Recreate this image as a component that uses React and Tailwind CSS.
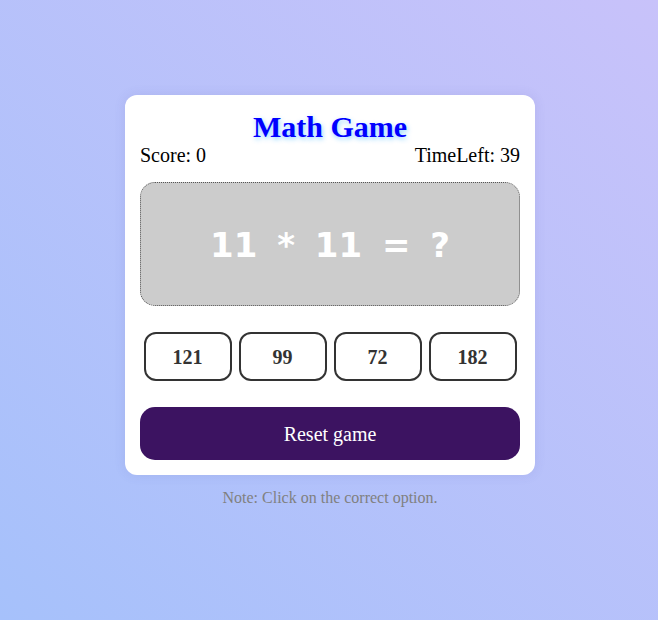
import React from "react";

export default function App() {
  const options = [121, 99, 72, 182];
  return (
    <div className="min-h-screen w-full bg-[linear-gradient(to_top_right,#a6c1fb,#c8c2fa)] pl-[2px] pt-[95px] font-['Liberation_Serif',serif]">
      <div className="mx-auto w-[410px] rounded-[12px] bg-white p-[15px] shadow-[0_0_12px_rgba(80,80,160,0.12)]">
        <h1 className="text-center text-[30px] font-bold leading-[34px] text-[#0000ff] [text-shadow:1px_2px_5px_rgba(0,160,255,0.45)]">
          Math Game
        </h1>
        <div className="flex justify-between text-[20px] leading-[23px] text-black">
          <span>Score: 0</span>
          <span>TimeLeft: 39</span>
        </div>
        <div className="mt-[15px] flex h-[124px] items-center justify-center rounded-[15px] border border-dotted border-[#555] bg-[#cccccc]">
          <span className="pt-[2px] font-['DejaVu_Sans',sans-serif] text-[34px] font-bold text-white [word-spacing:8px]">
            11 * 11 = ?
          </span>
        </div>
        <div className="mt-[26px] flex justify-around">
          {options.map((o) => (
            <button
              key={o}
              className="h-[49px] w-[88px] rounded-[12px] border-2 border-[#333] bg-white text-[20px] font-bold text-[#333]"
            >
              {o}
            </button>
          ))}
        </div>
        <button className="mt-[26px] h-[53px] w-full rounded-[15px] bg-[#3c1361] text-[20px] text-white">
          Reset game
        </button>
      </div>
      <p className="mt-[14px] text-center text-[16px] leading-[18px] text-[#808080]">
        Note: Click on the correct option.
      </p>
    </div>
  );
}
